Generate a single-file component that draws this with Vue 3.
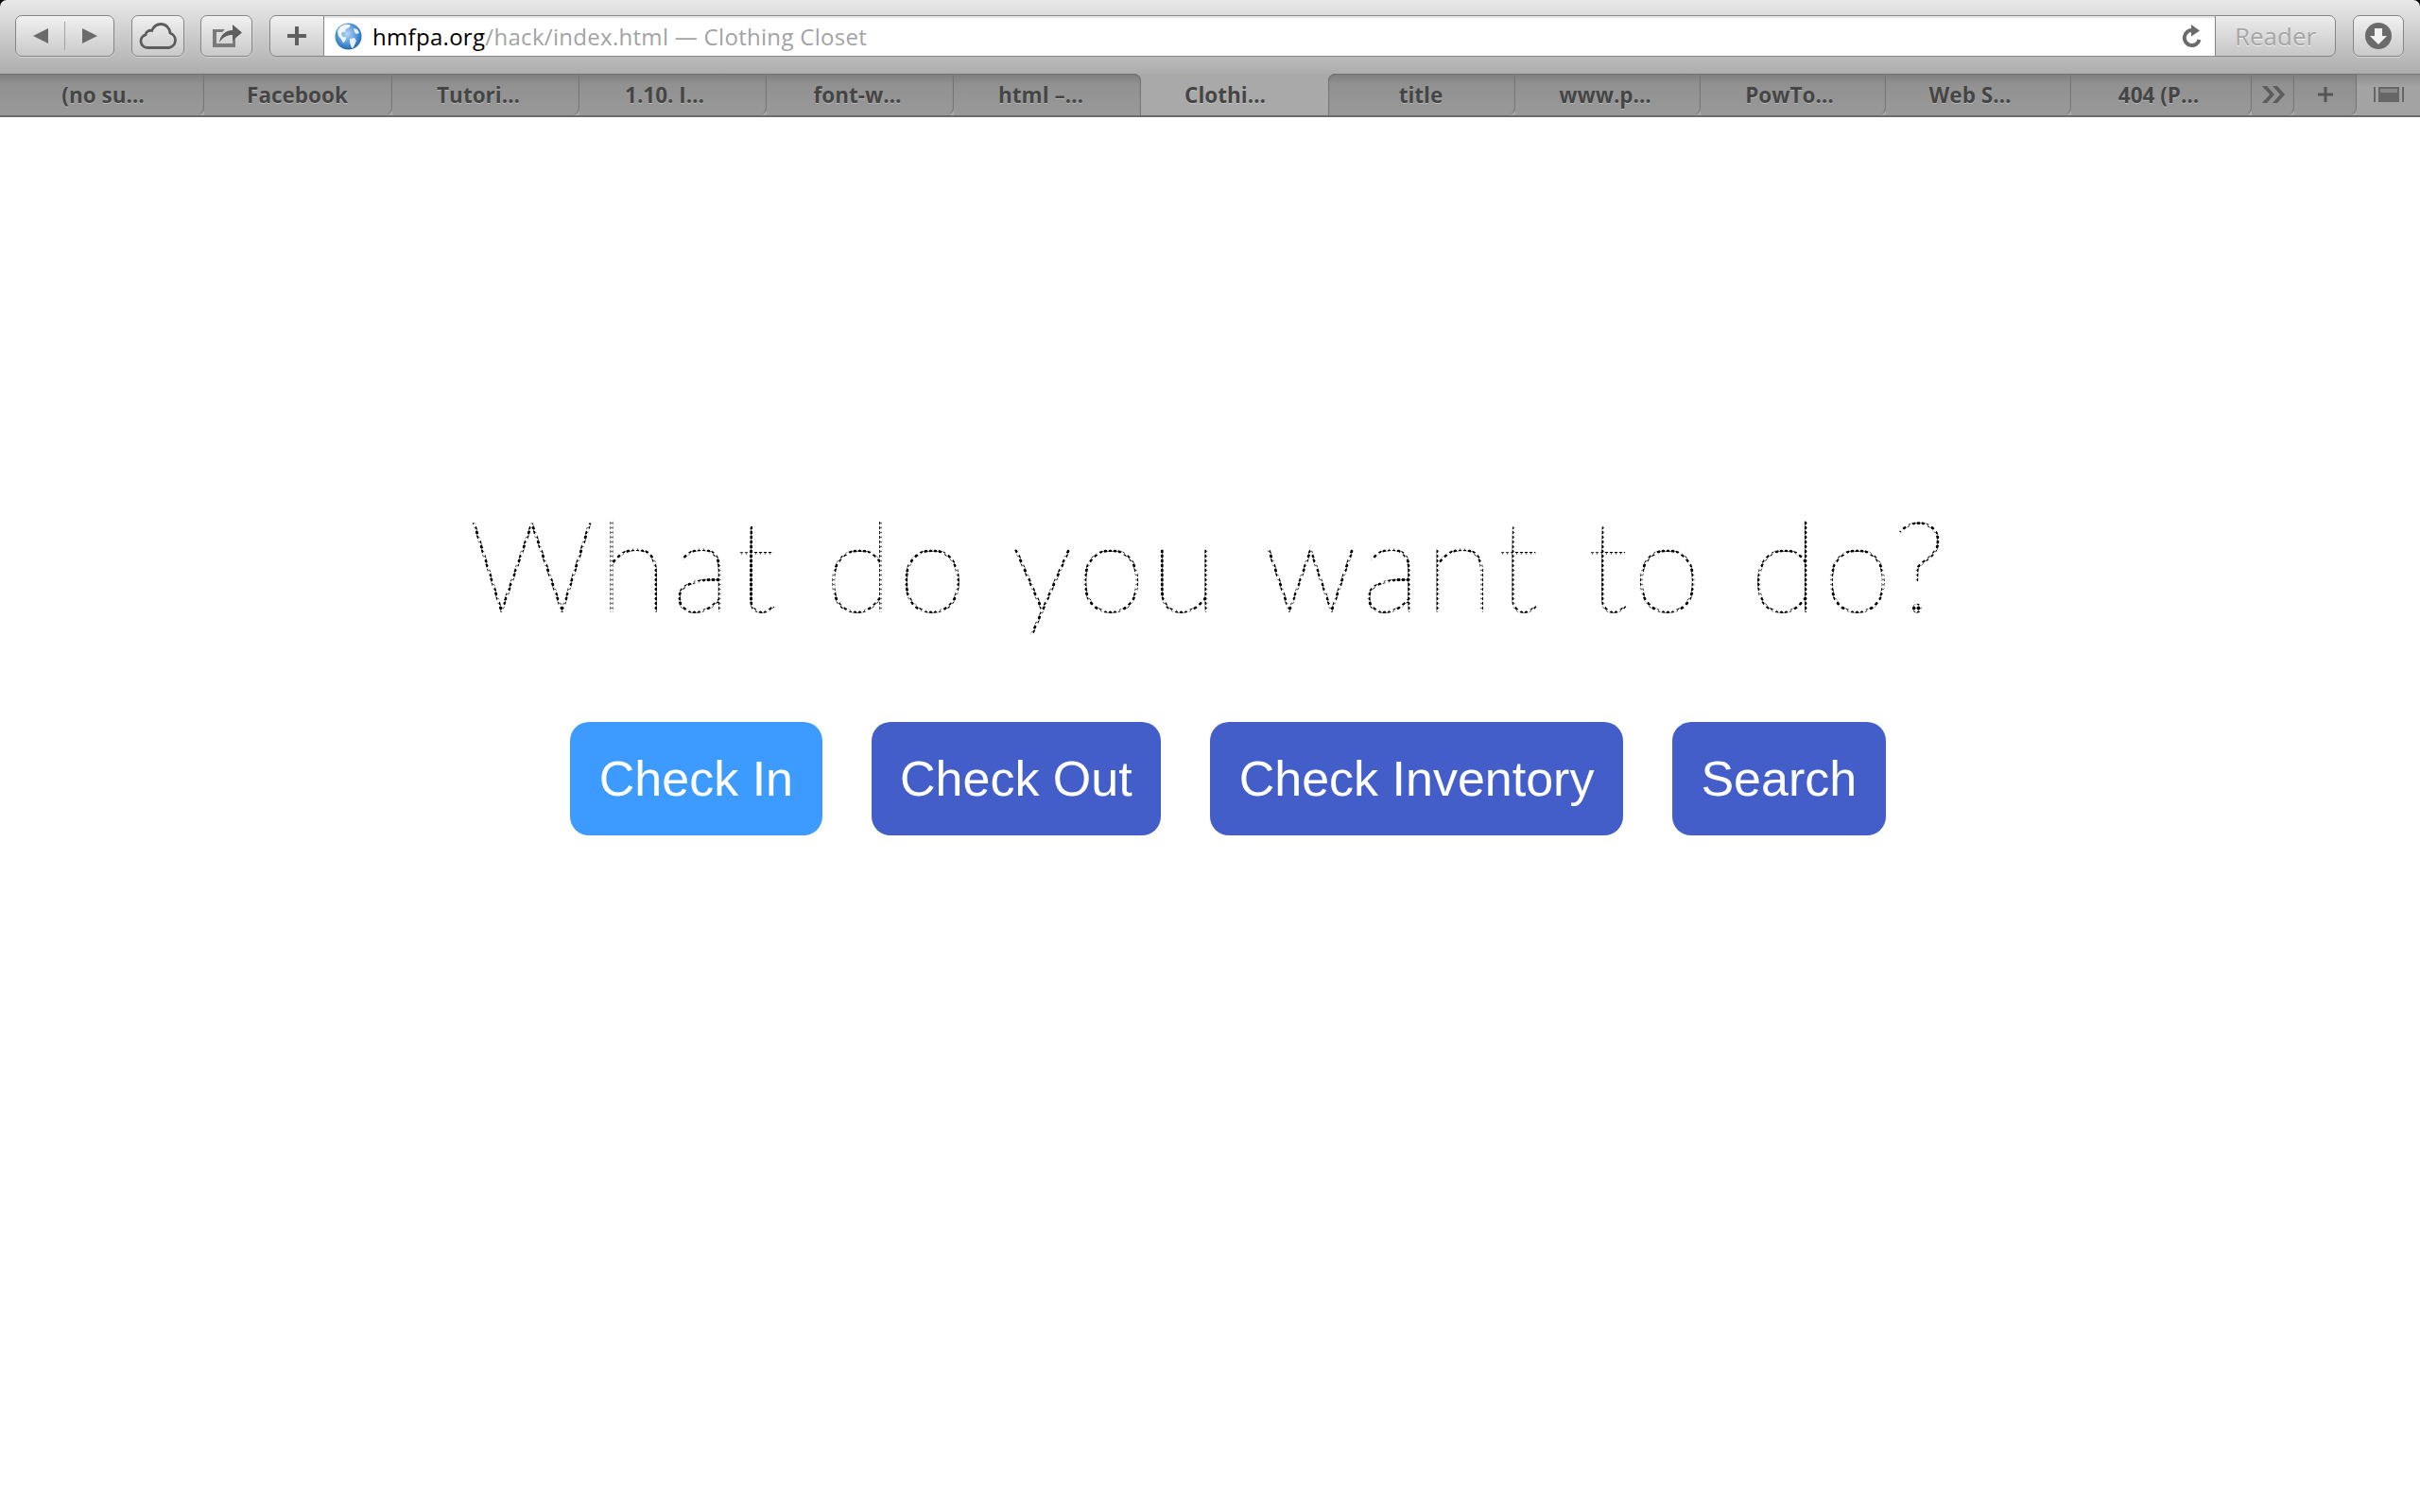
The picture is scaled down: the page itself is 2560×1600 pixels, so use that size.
<template>
  <div class="window">
    <header class="chrome">
      <div class="toolbar">
        <div class="btn nav-btn">
          <span class="nav-half">
            <svg width="18" height="18" viewBox="0 0 18 18"><path d="M17 1v16L1 9z" fill="#6b6b6b" /></svg>
          </span>
          <span class="nav-half">
            <svg width="18" height="18" viewBox="0 0 18 18"><path d="M1 1v16l16-8z" fill="#6b6b6b" /></svg>
          </span>
        </div>
        <div class="btn cloud-btn">
          <svg width="40" height="30" viewBox="0 0 40 30">
            <path d="M9 27.500a7 7 0 0 1-2-13.700 5 5 0 0 1 6.500-4.300C15.500 5 19 2.500 23 2.500c5.500 0 9.500 4 10 9.500a8 8 0 0 1-1.500 15.500z" fill="none" stroke="#5c5c5c" stroke-width="2.800" />
          </svg>
        </div>
        <div class="btn share-btn">
          <svg width="34" height="28" viewBox="0 0 34 28">
            <path d="M2 7h13l-3 3H6v12h17v-6l3-2v12H2z" fill="#7a7a7a" />
            <path d="M9 21c1-8 6-12.500 14-13V2l10 8.500-10 8.500v-6c-6 0-10.500 2.500-14 8z" fill="#5e5e5e" />
          </svg>
        </div>
        <div class="address">
          <div class="add-btn">
            <svg width="20" height="20" viewBox="0 0 20 20"><path d="M8 0h4v8h8v4h-8v8H8v-8H0V8h8z" fill="#5f5f5f" /></svg>
          </div>
          <div class="url-field">
            <svg class="globe" width="29" height="29" viewBox="0 0 29 29">
              <defs>
                <radialGradient id="globeFill" cx="45%" cy="40%" r="65%">
                  <stop offset="0" stop-color="#b9d8f5" />
                  <stop offset="0.6" stop-color="#4f93d8" />
                  <stop offset="1" stop-color="#1b5fae" />
                </radialGradient>
              </defs>
              <circle cx="14.500" cy="14.500" r="14" fill="url(#globeFill)" />
              <path d="M8 3c3-1.500 7-1.500 9-.5l-2 3-3 1-1 3-3 .5-1 2 1.500 3 4 .5-1.500 4-2 2-2-4-3-3.500L3 9c1-3 3-5 5-6z" fill="#f2f6fa" />
              <path d="M16 17l5-1 2 3-3 7-2 1-2-6z" fill="#e8eff6" />
              <path d="M20 6l4 1 2 4-3 1-2-2z" fill="#e8eff6" />
            </svg>
            <span class="url-text"><span class="host">hmfpa.org</span><span class="rest">/hack/index.html — Clothing Closet</span></span>
            <svg class="reload" width="22" height="24" viewBox="0 0 22 24">
              <path d="M12 6A8 8 0 1 0 19.500 16" fill="none" stroke="#6a6a6a" stroke-width="4" />
              <path d="M11 0l9 6.500-9 6z" fill="#6a6a6a" />
            </svg>
          </div>
          <div class="reader">Reader</div>
        </div>
        <div class="btn download-btn">
          <svg width="28" height="28" viewBox="0 0 28 28">
            <circle cx="14" cy="14" r="14" fill="#6b6b6b" />
            <path d="M10 6h8v8h5l-9 9-9-9h5z" fill="#f2f2f2" />
          </svg>
        </div>
      </div>
      <div class="tabbar">
        <div
          v-for="(tab, index) in tabs"
          :key="tab.label"
          class="tab"
          :class="{
            active: tab.active,
            'before-active': tabs[index + 1]?.active,
            'after-active': tabs[index - 1]?.active
          }"
          :style="{ width: tab.width + 'px', paddingLeft: tab.nudge > 0 ? tab.nudge * 2 + 'px' : 0, paddingRight: tab.nudge < 0 ? -tab.nudge * 2 + 'px' : 0 }"
        >
          {{ tab.label }}
        </div>
        <div class="tab tab-tool more">
          <svg width="26" height="20" viewBox="0 0 26 20">
            <path d="M1 1h5l8 9-8 9H1l8-9z" fill="#5d5d5d" />
            <path d="M12 1h5l8 9-8 9h-5l8-9z" fill="#5d5d5d" />
          </svg>
        </div>
        <div class="tab tab-tool plus">
          <svg width="16" height="16" viewBox="0 0 16 16"><path d="M6.500 0h3v6.500H16v3H9.500V16h-3V9.500H0v-3h6.500z" fill="#555" /></svg>
        </div>
        <div class="tab tab-tool list">
          <svg width="32" height="16" viewBox="0 0 32 16">
            <path d="M0 0h2v16H0zM30 0h2v16h-2z" fill="#666" />
            <path d="M5 0h22v16H5z" fill="#666" />
            <path d="M7 2h18v4H7z" fill="#8a8a8a" />
          </svg>
        </div>
      </div>
    </header>
    <main class="page">
      <h1 class="question">What do you want to do?</h1>
      <div class="actions">
        <button v-for="action in actions" :key="action.label" class="action" :class="{ current: action.current }">
          {{ action.label }}
        </button>
      </div>
    </main>
  </div>
</template>

<script setup>
// nudge moves the label off the tab's centre, in px
const tabs = [
  { label: '(no su…', width: 216, nudge: 1 },
  { label: 'Facebook', width: 199, nudge: -1 },
  { label: 'Tutori…', width: 198, nudge: -8 },
  { label: '1.10. I…', width: 198, nudge: -9 },
  { label: 'font-w…', width: 198, nudge: -3 },
  { label: 'html –…', width: 198, nudge: -7 },
  { label: 'Clothi…', width: 198, nudge: -10, active: true },
  { label: 'title', width: 198, nudge: -1 },
  { label: 'www.p…', width: 196, nudge: -3 },
  { label: 'PowTo…', width: 196, nudge: -4 },
  { label: 'Web S…', width: 196, nudge: -9 },
  { label: '404 (P…', width: 191, nudge: -3 }
]

const actions = [
  { label: 'Check In', current: true },
  { label: 'Check Out' },
  { label: 'Check Inventory' },
  { label: 'Search' }
]
</script>

<style scoped>
.window {
  min-height: 1600px;
  background: #fff;
  display: flex;
  flex-direction: column;
}

.chrome {
  background: #000;
  font-family: "Open Sans", "DejaVu Sans", sans-serif;
}

.toolbar {
  height: 78px;
  box-sizing: border-box;
  padding: 16px 17px 0 16px;
  display: flex;
  align-items: flex-start;
  border-radius: 7px 7px 0 0;
  background: linear-gradient(#e9e9e9, #adadad);
}

.btn {
  height: 44px;
  box-sizing: border-box;
  border: 1.500px solid #858585;
  border-radius: 7px;
  background: linear-gradient(#f1f1f1, #c9c9c9);
  box-shadow: 0 1px 0 rgba(255, 255, 255, 0.4);
  display: flex;
  align-items: center;
  justify-content: center;
}

.nav-btn {
  width: 105px;
}

.nav-half {
  flex: 1;
  height: 30px;
  display: flex;
  align-items: center;
  justify-content: center;
}

.nav-half + .nav-half {
  border-left: 1px solid #a3a3a3;
}

.cloud-btn {
  width: 56px;
  margin-left: 18px;
}

.share-btn {
  width: 55px;
  margin-left: 17px;
}

.address {
  flex: 1;
  margin-left: 18px;
  height: 44px;
  display: flex;
}

.add-btn {
  width: 58px;
  box-sizing: border-box;
  border: 1.500px solid #858585;
  border-radius: 7px 0 0 7px;
  background: linear-gradient(#f1f1f1, #c9c9c9);
  display: flex;
  align-items: center;
  justify-content: center;
}

.url-field {
  flex: 1;
  display: flex;
  align-items: center;
  padding: 0 14px 0 11px;
  background: #fff;
  border-top: 1.500px solid #8a8a8a;
  border-bottom: 1.500px solid #8a8a8a;
  box-shadow: inset 0 2px 2px rgba(0, 0, 0, 0.12);
}

.globe {
  flex: none;
}

.url-text {
  flex: 1;
  margin-left: 11px;
  font-size: 24px;
  letter-spacing: 0.3px;
  white-space: nowrap;
}

.host {
  color: #000;
}

.rest {
  color: #a3a3a3;
}

.reload {
  flex: none;
}

.reader {
  width: 128px;
  box-sizing: border-box;
  border: 1.500px solid #858585;
  border-radius: 0 7px 7px 0;
  background: linear-gradient(#ececec, #c6c6c6);
  color: #a6a6a6;
  text-shadow: 0 1px 0 rgba(255, 255, 255, 0.7);
  font-size: 26px;
  display: flex;
  align-items: center;
  justify-content: center;
}

.download-btn {
  width: 54px;
  margin-left: 18px;
}

.tabbar {
  height: 46px;
  box-sizing: border-box;
  display: flex;
  background: #a9a9a9;
  border-bottom: 2px solid #6b6b6b;
}

.tab {
  box-sizing: border-box;
  display: flex;
  align-items: center;
  justify-content: center;
  font-size: 22.500px;
  font-weight: 700;
  color: #454545;
  text-shadow: 0 1px 0 rgba(255, 255, 255, 0.35);
  white-space: nowrap;
  background: linear-gradient(#7d7d7d, #919191 25%, #999);
  box-shadow: inset 0 1px 0 #6f6f6f, inset -2px 0 1px -1px #747474;
  border-radius: 0 0 8px 0;
}

.tab.before-active {
  border-radius: 0 8px 0 0;
}

.tab.after-active {
  border-radius: 8px 0 8px 0;
  box-shadow: inset 0 1px 0 #6f6f6f, inset 2px 0 1px -1px #747474, inset -2px 0 1px -1px #747474;
}

.tab.active {
  background: #a9a9a9;
  box-shadow: none;
  border-radius: 0 0 8px 8px;
}

.tab-tool {
  text-shadow: none;
}

.more {
  width: 45px;
}

.plus {
  width: 66px;
}

.list {
  flex: 1;
  background: linear-gradient(#8c8c8c, #a3a3a3 30%);
  box-shadow: inset 0 1px 0 #777;
  border-radius: 0;
}

.page {
  flex: 1;
  padding-top: 382px;
  display: flex;
  flex-direction: column;
  align-items: center;
}

.question {
  margin: 0;
  font-family: Lato, Inter, sans-serif;
  font-weight: 100;
  font-size: 132px;
  line-height: 180px;
  letter-spacing: 5.300px;
  word-spacing: 3px;
  white-space: nowrap;
  color: #000;
  -webkit-text-stroke: 1.300px #000;
  -webkit-mask-image: radial-gradient(circle, #000 1.800px, transparent 2.300px);
  mask-image: radial-gradient(circle, #000 1.800px, transparent 2.300px);
  -webkit-mask-size: 5px 5px;
  mask-size: 5px 5px;
}

.actions {
  margin-top: 78px;
  padding-left: 38px;
  display: flex;
  gap: 52px;
}

.action {
  height: 120px;
  padding: 0 30.500px;
  border: none;
  border-radius: 20px;
  background: #435ec9;
  color: #fff;
  font-family: "Liberation Sans", Arial, sans-serif;
  font-size: 52px;
}

.action.current {
  background: #3d9bff;
}
</style>

<style>
html,
body {
  background: #fff;
}
</style>
